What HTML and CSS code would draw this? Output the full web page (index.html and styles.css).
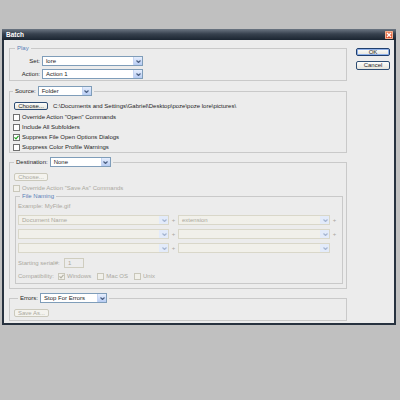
FILE: index.html
```html
<!DOCTYPE html>
<html lang="en">
<head>
  <meta charset="UTF-8" />
  <meta name="viewport" content="width=device-width, initial-scale=1.0"/>
  <title>Batch</title>
  <link rel="stylesheet" href="styles.css">
</head>
<body>

  <div class="window">
    <div class="titlebar">
      <span class="title">Batch</span>
      <span class="close">
        <svg width="8" height="8" viewBox="0 0 8 8"><path d="M2 2 L6 6 M6 2 L2 6" stroke="#fff" stroke-width="1.3" fill="none"/></svg>
      </span>
    </div>

    <div class="content">
      <div class="main">

        <fieldset class="group play">
          <legend class="plain">Play</legend>
          <div class="field-row">
            <span class="lbl">Set:</span>
            <div class="select w101"><span class="val">lore</span><span class="arrow"><svg width="5" height="3" viewBox="0 0 5 3"><polyline points="0.5,0.5 2.5,2.5 4.5,0.5"/></svg></span></div>
          </div>
          <div class="field-row">
            <span class="lbl">Action:</span>
            <div class="select w101"><span class="val">Action 1</span><span class="arrow"><svg width="5" height="3" viewBox="0 0 5 3"><polyline points="0.5,0.5 2.5,2.5 4.5,0.5"/></svg></span></div>
          </div>
        </fieldset>

        <fieldset class="group source">
          <legend class="combo"><span class="combo-in">Source:
            <span class="select w54"><span class="val">Folder</span><span class="arrow"><svg width="5" height="3" viewBox="0 0 5 3"><polyline points="0.5,0.5 2.5,2.5 4.5,0.5"/></svg></span></span></span>
          </legend>
          <div class="choose-row">
            <button class="btn small">Choose...</button>
            <span>C:\Documents and Settings\Gabriel\Desktop\poze\poze lore\pictures\</span>
          </div>
          <div class="check first"><span class="box"></span>Override Action "Open" Commands</div>
          <div class="check"><span class="box"></span>Include All Subfolders</div>
          <div class="check"><span class="box"><svg width="5" height="5" viewBox="0 0 5 5"><polyline points="0.5,2.3 2,3.8 4.5,0.8" stroke="#21a121" stroke-width="1.2" fill="none"/></svg></span>Suppress File Open Options Dialogs</div>
          <div class="check"><span class="box"></span>Suppress Color Profile Warnings</div>
        </fieldset>

        <fieldset class="group destination">
          <legend class="combo dest-legend"><span class="combo-in">Destination:
            <span class="select w61"><span class="val">None</span><span class="arrow"><svg width="5" height="3" viewBox="0 0 5 3"><polyline points="0.5,0.5 2.5,2.5 4.5,0.5"/></svg></span></span></span>
          </legend>
          <button class="btn small off">Choose...</button>
          <div class="check first off"><span class="box"></span>Override Action "Save As" Commands</div>

          <fieldset class="group naming">
            <legend class="plain">File Naming</legend>
            <div class="line off">Example: MyFile.gif</div>
            <div class="sel-row">
              <div class="select off w151"><span class="val">Document Name</span><span class="arrow"><svg width="5" height="3" viewBox="0 0 5 3"><polyline points="0.5,0.5 2.5,2.5 4.5,0.5"/></svg></span></div>
              <span class="plus">+</span>
              <div class="select off w152"><span class="val">extension</span><span class="arrow"><svg width="5" height="3" viewBox="0 0 5 3"><polyline points="0.5,0.5 2.5,2.5 4.5,0.5"/></svg></span></div>
              <span class="plus">+</span>
            </div>
            <div class="sel-row">
              <div class="select off w151"><span class="val"></span><span class="arrow"><svg width="5" height="3" viewBox="0 0 5 3"><polyline points="0.5,0.5 2.5,2.5 4.5,0.5"/></svg></span></div>
              <span class="plus">+</span>
              <div class="select off w152"><span class="val"></span><span class="arrow"><svg width="5" height="3" viewBox="0 0 5 3"><polyline points="0.5,0.5 2.5,2.5 4.5,0.5"/></svg></span></div>
              <span class="plus">+</span>
            </div>
            <div class="sel-row">
              <div class="select off w151"><span class="val"></span><span class="arrow"><svg width="5" height="3" viewBox="0 0 5 3"><polyline points="0.5,0.5 2.5,2.5 4.5,0.5"/></svg></span></div>
              <span class="plus">+</span>
              <div class="select off w152"><span class="val"></span><span class="arrow"><svg width="5" height="3" viewBox="0 0 5 3"><polyline points="0.5,0.5 2.5,2.5 4.5,0.5"/></svg></span></div>
            </div>
            <div class="serial-row off">
              <span class="serial-lbl">Starting serial#:</span>
              <span class="serial-box">1</span>
            </div>
            <div class="compat-row off">
              <span class="compat-lbl">Compatibility:</span>
              <span class="opt"><span class="box"><svg width="5" height="5" viewBox="0 0 5 5"><polyline points="0.5,2.3 2,3.8 4.5,0.8" stroke="#b4b2a6" stroke-width="1.2" fill="none"/></svg></span>Windows</span>
              <span class="opt"><span class="box"></span>Mac OS</span>
              <span class="opt"><span class="box"></span>Unix</span>
            </div>
          </fieldset>
        </fieldset>

        <fieldset class="group errors">
          <legend class="combo err-legend"><span class="combo-in">Errors:
            <span class="select w67"><span class="val">Stop For Errors</span><span class="arrow"><svg width="5" height="3" viewBox="0 0 5 3"><polyline points="0.5,0.5 2.5,2.5 4.5,0.5"/></svg></span></span></span>
          </legend>
          <button class="btn small wide off">Save As...</button>
        </fieldset>

      </div>

      <div class="side">
        <button class="btn default">OK</button>
        <button class="btn cancel">Cancel</button>
      </div>
    </div>
  </div>

</body>
</html>
```

FILE: styles.css
```css
body {
  margin: 0;
  background: #c0c0c0;
  font-family: 'Liberation Sans', Arial, sans-serif;
  font-size: 6px;
  color: #1e1e1e;
}

.window {
  width: 394px;
  margin: 29px 0 0 2px;
  border: 2px solid #27323f;
  border-top: 0;
  box-sizing: border-box;
}

.titlebar {
  height: 11px;
  margin: 0 -2px;
  padding: 0 3px 0 4px;
  display: flex;
  align-items: center;
  justify-content: space-between;
  background: linear-gradient(#6b7582, #37414e 45%, #1b2531);
}

.title {
  color: #fff;
  font-weight: bold;
  font-size: 6.5px;
}

.close {
  width: 8px;
  height: 8px;
  display: flex;
  border-radius: 1px;
  background: linear-gradient(#f08a62, #d8401f);
  box-shadow: inset 0 0 0 1px #f4b08e;
}

.content {
  display: flex;
  height: 283px;
  box-sizing: border-box;
  padding: 5px 0 0 5px;
  background: #ececec;
}

.main {
  width: 338px;
}

.side {
  width: 34px;
  margin-left: 9px;
  padding-top: 3px;
}

/* group boxes */
.group {
  margin: 0;
  padding: 0 3px;
  border: 1px solid #c9c9c9;
  min-width: 0;
}

.plain {
  color: #5a7fb8;
  line-height: 7px;
  padding: 0 2px;
  margin-left: 2px;
}

.combo {
  padding: 0 2px;
  height: 10px;
}

.combo-in {
  display: inline-flex;
  align-items: center;
  gap: 2px;
  height: 10px;
}

.dest-legend {
  margin-left: 1px;
}

.err-legend {
  margin-left: 5px;
}

.play {
  padding-top: 4px;
  padding-bottom: 1px;
}

.source {
  margin-top: 5px;
  padding-top: 6px;
}

.destination {
  margin-top: 4px;
  padding-top: 6px;
  padding-bottom: 4px;
}

.naming {
  width: 328px;
  box-sizing: border-box;
  margin-left: 2px;
  padding: 1px 0 2px 2px;
}

.errors {
  margin-top: 4px;
  padding-top: 6px;
  padding-bottom: 3px;
}

/* rows */
.field-row {
  display: flex;
  align-items: center;
  gap: 2px;
  height: 10px;
}

.field-row + .field-row {
  margin-top: 3px;
}

.lbl {
  width: 27px;
  text-align: right;
}

.choose-row {
  display: flex;
  align-items: center;
  gap: 5px;
}

.check {
  display: flex;
  align-items: center;
  gap: 2px;
  height: 10px;
}

.check.first {
  margin-top: 2px;
}

.line {
  height: 10px;
  line-height: 10px;
}

.sel-row {
  display: flex;
  align-items: center;
  height: 10px;
  margin-top: 4px;
}

.plus {
  width: 9px;
  text-align: center;
  color: #aaa89e;
}

.serial-row {
  display: flex;
  align-items: center;
  height: 10px;
  margin-top: 5px;
}

.serial-lbl {
  width: 46px;
}

.serial-box {
  width: 20px;
  height: 10px;
  box-sizing: border-box;
  border: 1px solid #cfcdbf;
  padding-left: 3px;
  line-height: 8px;
}

.compat-row {
  display: flex;
  align-items: center;
  height: 10px;
  margin-top: 3px;
}

.compat-lbl {
  width: 40px;
}

.opt {
  display: flex;
  align-items: center;
  gap: 2px;
  margin-right: 6px;
}

.box {
  width: 7px;
  height: 7px;
  box-sizing: border-box;
  border: 1px solid #707070;
  background: #fff;
  display: flex;
  align-items: center;
  justify-content: center;
}

.off {
  color: #aaa89e;
}

.off .box {
  border-color: #c9c7ba;
  background: #f1f0ea;
}

/* drop downs */
.select {
  display: flex;
  height: 10px;
  box-sizing: border-box;
  border: 1px solid #7f9db9;
  background: #fff;
  color: #1e1e1e;
}

.select .val {
  flex: 1;
  padding-left: 3px;
  line-height: 8px;
  white-space: nowrap;
  overflow: hidden;
}

.select .arrow {
  width: 8px;
  display: flex;
  align-items: center;
  justify-content: center;
  background: linear-gradient(#e6eefd, #b7ccf3);
  border-left: 1px solid #c5d5f3;
}

.select svg polyline {
  fill: none;
  stroke: #4d6185;
  stroke-width: 1.2;
}

.select.off {
  border-color: #d9d7c9;
  background: #f1f0ea;
  color: #aaa89e;
}

.select.off .arrow {
  background: #e3ebfa;
  border-left-color: #e3ebfa;
}

.select.off svg polyline {
  stroke: #a6b6d2;
}

.w54 { width: 54px; }
.w61 { width: 61px; }
.w67 { width: 67px; }
.w101 { width: 101px; }
.w151 { width: 151px; }
.w152 { width: 152px; }

/* buttons */
.btn {
  display: block;
  width: 34px;
  height: 9px;
  padding: 0;
  font-family: inherit;
  font-size: 6px;
  line-height: 7px;
  color: #1e1e1e;
  border: 1px solid #2e4d74;
  border-radius: 2px;
  background: linear-gradient(#fdfdfb, #e6e5dd);
}

.btn.small {
  height: 8px;
  line-height: 6px;
  margin-left: 1px;
}

.btn.wide {
  width: 35px;
}

.btn.off {
  border-color: #cbc9bc;
  color: #aaa89e;
  background: #f4f3ee;
}

.btn.default {
  height: 8px;
  line-height: 6px;
  border-color: #1f3f6e;
  box-shadow: inset 0 0 0 1px #8fb0e8;
}

.btn.cancel {
  margin-top: 5px;
}
```
